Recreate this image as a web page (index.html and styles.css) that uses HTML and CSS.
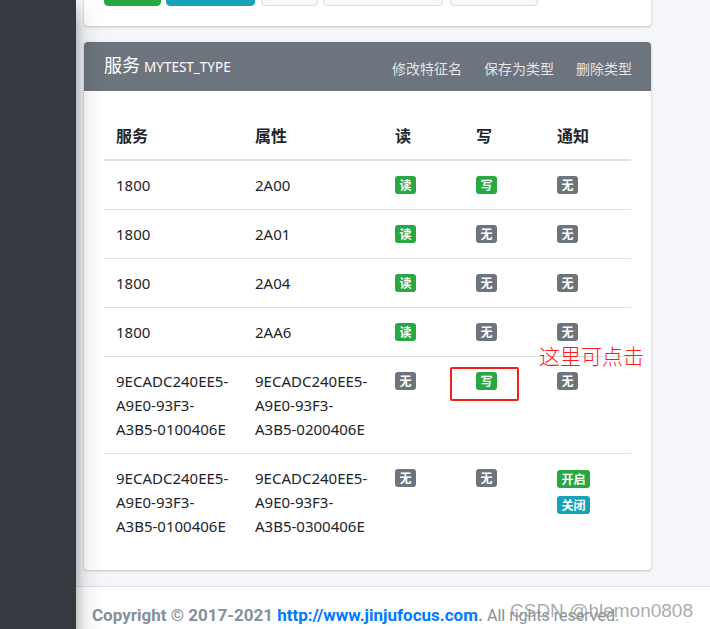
FILE: index.html
```html
<!DOCTYPE html>
<html lang="zh-CN">

<head>
  <meta charset="UTF-8">
  <meta name="viewport" content="width=device-width, initial-scale=1.0">
  <title>服务 MYTEST_TYPE</title>
  <link rel="stylesheet" href="styles.css">
</head>

<body>
  <div class="wrapper">
    <aside class="main-sidebar"></aside>

    <div class="main-area">
      <div class="content">
        <!-- upper card, scrolled mostly out of view -->
        <div class="card card-top">
          <div class="btn-row">
            <button class="btn btn-success btn-w57"></button>
            <button class="btn btn-info btn-w89"></button>
            <button class="btn btn-light btn-w57"></button>
            <button class="btn btn-light btn-w120"></button>
            <button class="btn btn-light btn-w88"></button>
          </div>
        </div>

        <div class="card card-service">
          <div class="card-header">
            <h3 class="card-title">服务 <small>MYTEST_TYPE</small></h3>
            <div class="card-tools">
              <a href="#">修改特征名</a>
              <a href="#">保存为类型</a>
              <a href="#">删除类型</a>
            </div>
          </div>
          <div class="card-body">
            <table class="table">
              <thead>
                <tr>
                  <th class="col-service">服务</th>
                  <th class="col-attr">属性</th>
                  <th class="col-flag">读</th>
                  <th class="col-flag">写</th>
                  <th>通知</th>
                </tr>
              </thead>
              <tbody>
                <tr>
                  <td>1800</td>
                  <td>2A00</td>
                  <td><span class="badge badge-success">读</span></td>
                  <td><span class="badge badge-success">写</span></td>
                  <td><span class="badge badge-secondary">无</span></td>
                </tr>
                <tr>
                  <td>1800</td>
                  <td>2A01</td>
                  <td><span class="badge badge-success">读</span></td>
                  <td><span class="badge badge-secondary">无</span></td>
                  <td><span class="badge badge-secondary">无</span></td>
                </tr>
                <tr>
                  <td>1800</td>
                  <td>2A04</td>
                  <td><span class="badge badge-success">读</span></td>
                  <td><span class="badge badge-secondary">无</span></td>
                  <td><span class="badge badge-secondary">无</span></td>
                </tr>
                <tr>
                  <td>1800</td>
                  <td>2AA6</td>
                  <td><span class="badge badge-success">读</span></td>
                  <td><span class="badge badge-secondary">无</span></td>
                  <td class="note-cell"><span class="badge badge-secondary">无</span>
                    <span class="note-text">这里可点击</span>
                  </td>
                </tr>
                <tr>
                  <td>9ECADC240EE5-A9E0-93F3-A3B5-0100406E</td>
                  <td>9ECADC240EE5-A9E0-93F3-A3B5-0200406E</td>
                  <td><span class="badge badge-secondary">无</span></td>
                  <td class="mark-cell"><span class="badge badge-success">写</span><span class="mark-box"></span></td>
                  <td><span class="badge badge-secondary">无</span></td>
                </tr>
                <tr>
                  <td>9ECADC240EE5-A9E0-93F3-A3B5-0100406E</td>
                  <td>9ECADC240EE5-A9E0-93F3-A3B5-0300406E</td>
                  <td><span class="badge badge-secondary">无</span></td>
                  <td><span class="badge badge-secondary">无</span></td>
                  <td>
                    <div class="badge-line"><span class="badge badge-success">开启</span></div>
                    <div class="badge-line"><span class="badge badge-info">关闭</span></div>
                  </td>
                </tr>
              </tbody>
            </table>
          </div>
        </div>
      </div>

      <footer class="main-footer">
        <strong>Copyright &copy; 2017-2021 <a href="#">http://www.jinjufocus.com</a>.</strong>
        <span class="rights">All rights reserved.</span>
        <span class="watermark">CSDN @hlemon0808</span>
      </footer>
    </div>
  </div>
</body>

</html>
```

FILE: styles.css
```css
body {
  margin: 0;
  font-family: "Noto Sans", "Noto Sans CJK SC", sans-serif;
  font-size: 16px;
  line-height: 1.5;
  color: #212529;
  background-color: #f4f6f9;
  overflow: hidden;
}

.wrapper {
  display: flex;
  min-height: 100vh;
}

.main-sidebar {
  width: 76px;
  flex-shrink: 0;
  background-color: #343a40;
  box-shadow: 0 14px 28px rgba(0, 0, 0, .25), 0 10px 10px rgba(0, 0, 0, .22);
  position: relative;
  z-index: 2;
}

.main-area {
  flex: 1;
  display: flex;
  flex-direction: column;
}

.content {
  padding: 0 8px 16px 8px;
  margin-top: -52px;
}

.card {
  width: 567px;
  background-color: #fff;
  border-radius: 4px;
  box-shadow: 0 0 1px rgba(0, 0, 0, .125), 0 1px 3px rgba(0, 0, 0, .2);
}

.card-top {
  padding: 20px;
  box-sizing: border-box;
  margin-bottom: 16px;
}

.btn-row {
  display: flex;
  gap: 5px;
}

.btn {
  height: 38px;
  border-radius: 4px;
  border: 1px solid transparent;
  padding: 0;
}

.btn-success {
  background-color: #28a745;
  border-color: #28a745;
}

.btn-info {
  background-color: #17a2b8;
  border-color: #17a2b8;
}

.btn-light {
  background-color: #f8f9fa;
  border-color: #ddd;
}

.btn-w57 { width: 57px; }
.btn-w89 { width: 89px; margin-right: 1px; }
.btn-w120 { width: 120px; }
.btn-w88 { width: 88px; margin-left: 2px; }

.card-header {
  display: flex;
  align-items: center;
  justify-content: space-between;
  height: 49px;
  box-sizing: border-box;
  padding: 0 19px 0 20px;
  background-color: #6c757d;
  border-radius: 4px 4px 0 0;
  color: #fff;
}

.card-title {
  margin: 0;
  font-size: 18px;
  font-weight: 400;
  font-family: "Noto Sans CJK SC", sans-serif;
  line-height: 24px;
  margin-top: -2px;
}

.card-title small {
  font-family: "Noto Sans", sans-serif;
  font-size: 13.5px;
}

.card-tools {
  display: flex;
  gap: 22px;
  margin-top: 4px;
}

.card-tools a {
  color: rgba(255, 255, 255, .82);
  text-decoration: none;
  font-size: 14px;
  font-family: "Noto Sans CJK SC", sans-serif;
}

.card-body {
  padding: 20px;
}

.table {
  width: 100%;
  border-collapse: collapse;
}

.table th,
.table td {
  padding: 12px;
  text-align: left;
  vertical-align: top;
  line-height: 24px;
}

.table th {
  font-size: 16px;
  font-weight: 700;
  font-family: "Noto Sans CJK SC", sans-serif;
  border-bottom: 2px solid #dee2e6;
}

.table td {
  font-size: 15px;
  border-top: 1px solid #dee2e6;
}

.col-service { width: 115px; }
.col-attr { width: 116px; }
.col-flag { width: 57px; }

.badge {
  display: inline-block;
  padding: 3px 4.5px;
  font-size: 12px;
  font-weight: 700;
  line-height: 1;
  font-family: "Noto Sans CJK SC", sans-serif;
  color: #fff;
  border-radius: 3px;
  vertical-align: 1px;
}

.badge-success { background-color: #28a745; }
.badge-secondary { background-color: #6c757d; }
.badge-info { background-color: #17a2b8; }

.badge-line {
  height: 26px;
  line-height: 26px;
}

.note-cell,
.mark-cell {
  position: relative;
}

.note-text {
  position: absolute;
  left: -6px;
  top: 35px;
  color: #ff1a1a;
  font-size: 21px;
  font-family: "Noto Sans CJK SC", sans-serif;
  font-weight: 300;
  white-space: nowrap;
  line-height: 24px;
}

.mark-box {
  position: absolute;
  left: -14px;
  top: 10px;
  width: 65px;
  height: 30px;
  border: 2px solid #f0201a;
  border-radius: 2px;
}

.main-footer {
  position: relative;
  background-color: #fff;
  border-top: 1px solid #dee2e6;
  padding: 16px;
  color: #869099;
  font-family: Roboto, sans-serif;
  font-size: 17px;
  line-height: 24px;
  flex: 1;
}

.main-footer a {
  color: #007bff;
  text-decoration: none;
}

.rights {
  font-size: 16px;
}

.watermark {
  position: absolute;
  left: 434px;
  top: 12px;
  font-family: "Liberation Sans", sans-serif;
  font-size: 19px;
  color: rgba(150, 150, 150, .8);
  white-space: nowrap;
}
```
